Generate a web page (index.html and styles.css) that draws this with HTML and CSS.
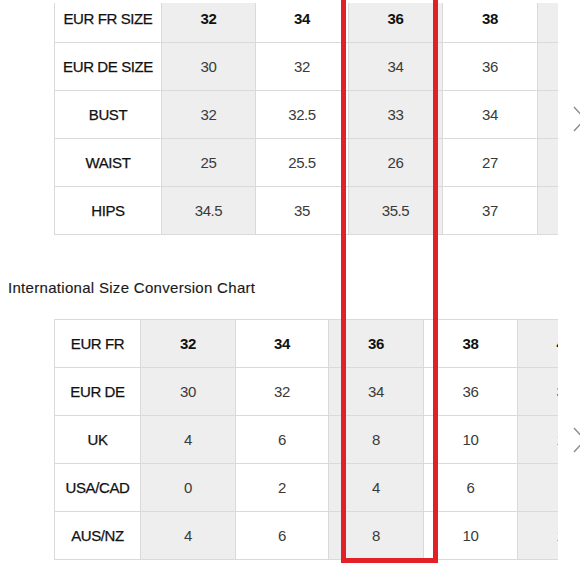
FILE: index.html
```html
<!DOCTYPE html>
<html>
<head>
<meta charset="utf-8">
<link rel="stylesheet" href="styles.css">
</head>
<body>
<div class="page">
  <div class="block block-top">
    <div class="scroll">
      <table class="chart chart-top">
        <colgroup>
          <col class="c-label-wide"><col class="c94"><col class="c93"><col class="c94"><col class="c95"><col class="c94">
        </colgroup>
        <tr class="head">
          <th class="label">EUR FR SIZE</th><td class="g">32</td><td>34</td><td class="g">36</td><td>38</td><td class="g">40</td>
        </tr>
        <tr>
          <th class="label">EUR DE SIZE</th><td class="g">30</td><td>32</td><td class="g">34</td><td>36</td><td class="g">38</td>
        </tr>
        <tr>
          <th class="label">BUST</th><td class="g">32</td><td>32.5</td><td class="g">33</td><td>34</td><td class="g">35</td>
        </tr>
        <tr>
          <th class="label">WAIST</th><td class="g">25</td><td>25.5</td><td class="g">26</td><td>27</td><td class="g">28</td>
        </tr>
        <tr>
          <th class="label">HIPS</th><td class="g">34.5</td><td>35</td><td class="g">35.5</td><td>37</td><td class="g">38</td>
        </tr>
      </table>
    </div>
    <svg class="chev" width="14" height="26" viewBox="0 0 14 26"><polyline points="1,1 12,13 1,25" fill="none" stroke="#8a8a8a" stroke-width="1.4"/></svg>
  </div>

  <div class="title">International Size Conversion Chart</div>

  <div class="block block-bottom">
    <div class="scroll">
      <table class="chart chart-bottom">
        <colgroup>
          <col class="c-label"><col class="c95"><col class="c93"><col class="c95"><col class="c94"><col class="c94">
        </colgroup>
        <tr class="head">
          <th class="label">EUR FR</th><td class="g">32</td><td>34</td><td class="g">36</td><td>38</td><td class="g">40</td>
        </tr>
        <tr>
          <th class="label">EUR DE</th><td class="g">30</td><td>32</td><td class="g">34</td><td>36</td><td class="g">38</td>
        </tr>
        <tr>
          <th class="label">UK</th><td class="g">4</td><td>6</td><td class="g">8</td><td>10</td><td class="g">12</td>
        </tr>
        <tr>
          <th class="label">USA/CAD</th><td class="g">0</td><td>2</td><td class="g">4</td><td>6</td><td class="g">8</td>
        </tr>
        <tr>
          <th class="label">AUS/NZ</th><td class="g">4</td><td>6</td><td class="g">8</td><td>10</td><td class="g">12</td>
        </tr>
      </table>
    </div>
    <svg class="chev" width="14" height="26" viewBox="0 0 14 26"><polyline points="1,1 12,13 1,25" fill="none" stroke="#8a8a8a" stroke-width="1.4"/></svg>
  </div>

  <div class="highlight"></div>
</div>
</body>
</html>
```

FILE: styles.css
```css
html, body {
  margin: 0;
  padding: 0;
  background: #ffffff;
}

.page {
  position: relative;
  width: 580px;
  height: 580px;
  overflow: hidden;
  font-family: "Liberation Sans", Arial, sans-serif;
  color: #222;
}

.block {
  display: flex;
  align-items: center;
  padding-left: 54px;
}

.block-top {
  margin-top: 3px;
}

.scroll {
  width: 504px;
  overflow: hidden;
  flex: none;
}

.chev {
  flex: none;
  margin-left: 15px;
}

.chart {
  border-collapse: collapse;
  table-layout: fixed;
}

.chart-top {
  width: 577px;
  margin-top: -9px;
}

.chart-bottom {
  width: 557px;
}

.chart th,
.chart td {
  height: 47px;
  padding: 0;
  border: 1px solid #dadada;
  text-align: center;
  vertical-align: middle;
  font-size: 15px;
  letter-spacing: -0.4px;
  white-space: nowrap;
  overflow: hidden;
}

.chart td {
  color: #3a3a3a;
  font-weight: 400;
}

.chart .label {
  color: #111;
  font-weight: 400;
  -webkit-text-stroke: 0.25px #111;
  background: #fff;
}

.chart .head td {
  color: #111;
  font-weight: 700;
}

.chart .g {
  background: #eeeeee;
}

.c-label-wide { width: 107px; }
.c-label { width: 86px; }
.c93 { width: 93px; }
.c94 { width: 94px; }
.c95 { width: 95px; }

.title {
  margin: 43px 0 21px 8px;
  font-size: 15px;
  line-height: 20px;
  letter-spacing: 0.3px;
  color: #1a1a1a;
  -webkit-text-stroke: 0.15px #1a1a1a;
}

.highlight {
  position: absolute;
  left: 341px;
  top: -10px;
  width: 97px;
  height: 573px;
  box-sizing: border-box;
  border: 5px solid #e31f28;
}
```
